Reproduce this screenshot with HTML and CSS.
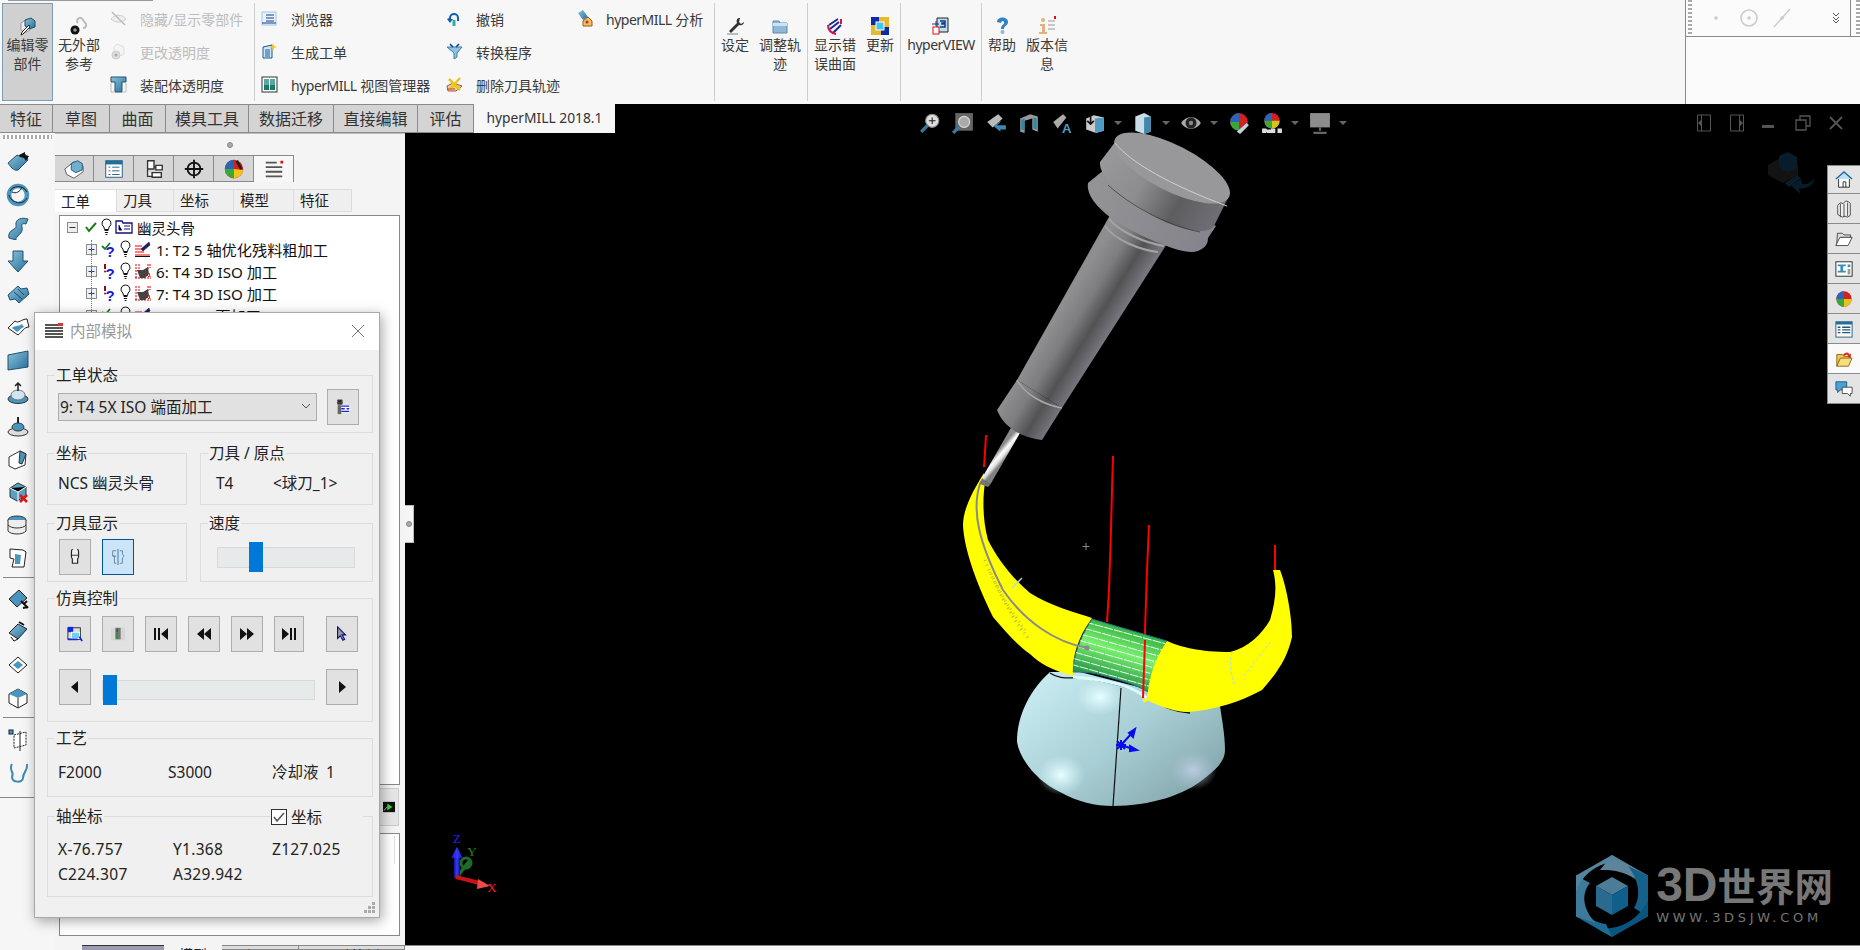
FILE: index.html
```html
<!DOCTYPE html>
<html lang="zh">
<head>
<meta charset="utf-8">
<title>hyperMILL 内部模拟</title>
<link rel="stylesheet" href="styles.css">
</head>
<body>
<svg class="defs" width="0" height="0">
  <defs>
    <symbol id="bulb" viewBox="0 0 11 18"><path d="M5.5 1a4.4 4.4 0 0 0-2.6 8l.6 2.5h4l.6-2.5a4.4 4.4 0 0 0-2.6-8z" fill="#fff" stroke="#111"/><path d="M3.6 12.5h3.8M3.9 14.5h3.2M4.6 16.500h1.800" stroke="#111" fill="none"/></symbol>
    <symbol id="plus" viewBox="0 0 11 11"><rect x=".5" y=".5" width="10" height="10" fill="#eef0f4" stroke="#8b8b8b"/><path d="M2.500 5.500h6M5.500 2.500v6" stroke="#1c3a7a"/></symbol>
    <symbol id="minus" viewBox="0 0 11 11"><rect x=".5" y=".5" width="10" height="10" fill="#eee" stroke="#8b8b8b"/><path d="M2.500 5.500h6" stroke="#333"/></symbol>
    <symbol id="opa" viewBox="0 0 18 16"><path d="M1 14h15M1 11h9M1 8h6M1 5h7" stroke="#e00" fill="none"/><path d="M1 15.500h15" stroke="#111"/><path d="M15 1 7 8l2 2 7-6z" fill="#223" stroke="#22c" stroke-width=".7"/></symbol>
    <symbol id="opb" viewBox="0 0 18 16"><path d="M2 1v14M5 1v5M14 1v5M16 1v4M1 15h16" stroke="#d00" fill="none" stroke-dasharray="2 1"/><path d="M3 7h6l5-3 1 7-4 4H6z" fill="#444"/><path d="M12 11l3 3M15 10l1 4" stroke="#e00"/></symbol>
    <symbol id="okst" viewBox="0 0 16 18"><path d="M1 6l3 3 5-6" fill="none" stroke="#1d7a1d" stroke-width="1.800"/><text x="9" y="17" class="qm">?</text></symbol>
    <symbol id="wnst" viewBox="0 0 16 18"><path d="M4 2v5" stroke="#8a0f0f" stroke-width="2"/><circle cx="4" cy="9.500" r="1" fill="#8a0f0f"/><text x="9" y="17" class="qm">?</text></symbol>
    <linearGradient id="tileblue" x1="0" y1="0" x2="1" y2="1"><stop offset="0" stop-color="#8cc3dc"/><stop offset="1" stop-color="#276f9a"/></linearGradient>
  </defs>
</svg>

<header class="ribbon">
  <div class="rb-big rb-pressed">
    <svg class="rb-ic" viewBox="0 0 20 20"><path d="M3 7l6-4 3 2v9l-5 3-4-3z" fill="#eee" stroke="#999"/><path d="M7 4l6-2 4 3v6l-6 2-4-3z" fill="url(#tileblue)" stroke="#1e4f6e"/><path d="M12 11l-7 7-2 1 1-3 7-7z" fill="#fff" stroke="#222"/></svg>
    <span>编辑零<br>部件</span>
  </div>
  <div class="rb-big rb-w52">
    <svg class="rb-ic" viewBox="0 0 20 20"><path d="M9 7a3 3 0 1 1 5-3l3 4a3 3 0 0 1-3 4" fill="none" stroke="#bbb" stroke-width="2"/><circle cx="6" cy="14" r="4.500" fill="#111"/><circle cx="6" cy="14" r="1.800" fill="#999"/></svg>
    <span>无外部<br>参考</span>
  </div>
  <div class="rb-col rb-c3">
    <div class="rb-row rb-off"><svg class="rb-sm" viewBox="0 0 17 17"><path d="M1 9c4-5 11-5 15 0-4 4-11 4-15 0z" fill="#eee" stroke="#ccc"/><path d="M2 2l13 13" stroke="#bbb" stroke-width="1.500"/></svg>隐藏/显示零部件</div>
    <div class="rb-row rb-off"><svg class="rb-sm" viewBox="0 0 17 17"><path d="M7 1l7 3v7l-4 2-6-3V4z" fill="#f4f4f4" stroke="#ddd"/><circle cx="6" cy="12" r="4" fill="#ddd" stroke="#ccc"/><circle cx="6" cy="12" r="1.500" fill="#aaa"/></svg>更改透明度</div>
    <div class="rb-row"><svg class="rb-sm" viewBox="0 0 17 17"><path d="M1 1h15v5h-4v10h-7V6H1z" fill="url(#tileblue)" stroke="#24526e"/><path d="M1 7v9h4M16 7v9h-4" fill="none" stroke="#bbb"/></svg>装配体透明度</div>
  </div>
  <i class="rb-sep"></i>
  <div class="rb-col rb-c4">
    <div class="rb-row"><svg class="rb-sm" viewBox="0 0 17 17"><rect x="1" y="2" width="14" height="13" fill="#e9f3fb" stroke="#9cc6e8"/><path d="M5 5h8M5 8h8M5 11h8M1 13h14" stroke="#123d8a"/></svg>浏览器</div>
    <div class="rb-row"><svg class="rb-sm" viewBox="0 0 17 17"><path d="M2 4l9-2v13H2z" fill="#cfe4f4" stroke="#1d5a94"/><path d="M4 7h5M4 9h5M4 11h5M4 13h5" stroke="#1d5a94"/><path d="M12 0l1 3 3 1-3 1-1 3-1-3-3-1 3-1z" fill="#f2c32c"/></svg>生成工单</div>
    <div class="rb-row"><svg class="rb-sm" viewBox="0 0 17 17"><rect x="1" y="1" width="15" height="15" fill="#fff" stroke="#333"/><path d="M3 3h5v11H3zM9 3h5v11H9z" fill="#1a7a6a"/><path d="M3 3h5v6H3zM9 3h5v6H9z" fill="#5aa7a0"/></svg><span><span class="lat">hyperMILL</span> 视图管理器</span></div>
  </div>
  <div class="rb-col rb-c5">
    <div class="rb-row"><svg class="rb-sm" viewBox="0 0 17 17"><path d="M3 8a5 5 0 1 1 10 0v3h-2V8a3 3 0 1 0-6 0v1h2l-3 4-3-4z" fill="#0e5fb0"/><path d="M8 10v6" stroke="#3aa" stroke-width="3"/></svg>撤销</div>
    <div class="rb-row"><svg class="rb-sm" viewBox="0 0 17 17"><path d="M1 4h15l-5 6v4l-3 2v-6z" fill="#8fc3e0" stroke="#3d7fa8"/><path d="M4 1l3 3M13 1l-3 3" stroke="#123d8a" stroke-width="1.500"/></svg>转换程序</div>
    <div class="rb-row"><svg class="rb-sm" viewBox="0 0 17 17"><path d="M1 10l6-3 9 3-6 5H2z" fill="#e7d38c" stroke="#a55"/><path d="M3 3l11 11M14 2 4 13" stroke="#e9c61c" stroke-width="2.500"/><path d="M1 13h8" stroke="#c33"/></svg>删除刀具轨迹</div>
  </div>
  <div class="rb-col rb-c6">
    <div class="rb-row"><svg class="rb-sm" viewBox="0 0 17 17"><path d="M2 3l5-3 5 7-5 3z" fill="url(#tileblue)"/><path d="M7 11l5-4 4 4v5H7z" fill="#f0c060" stroke="#a35a16"/><circle cx="11" cy="12" r="1.500" fill="#a33"/></svg><span><span class="lat">hyperMILL</span> 分析</span></div>
  </div>
  <i class="rb-sep"></i>
  <div class="rb-big rb-w40">
    <svg class="rb-ic" viewBox="0 0 20 20"><path d="M15 2c-3 0-4 2-3 5l-8 8 2 2 8-8c3 1 5-1 5-3l-3 2-2-2z" fill="#333"/><path d="M2 18h11" stroke="#bbb" stroke-width="2"/></svg>
    <span>设定</span>
  </div>
  <div class="rb-big rb-w50">
    <svg class="rb-ic" viewBox="0 0 20 20"><path d="M3 5h6l1 2h7v10H3z" fill="#8eb8d8" stroke="#5a8bb0"/><path d="M3 7h14v3H3z" fill="#cfe2f1"/></svg>
    <span>调整轨<br>迹</span>
  </div>
  <i class="rb-gap"></i>
  <i class="rb-sep"></i>
  <div class="rb-big rb-w54">
    <svg class="rb-ic" viewBox="0 0 20 20"><path d="M4 9l9-6M5 13l9-7M8 17l8-8" stroke="#1c2a8c" stroke-width="2" fill="none"/><path d="M3 9c0 5 3 8 8 9M16 3v5" stroke="#d3154f" stroke-width="2" fill="none"/></svg>
    <span>显示错<br>误曲面</span>
  </div>
  <div class="rb-big rb-w36">
    <svg class="rb-ic" viewBox="0 0 20 20"><rect x="1" y="1" width="18" height="18" fill="#e7b92c"/><rect x="1" y="1" width="8" height="8" fill="#0f2aa8"/><rect x="11" y="11" width="8" height="8" fill="#0f2aa8"/><rect x="6" y="6" width="8" height="8" fill="#41c8f2" stroke="#fff"/></svg>
    <span>更新</span>
  </div>
  <i class="rb-gap"></i>
  <i class="rb-sep"></i>
  <div class="rb-big rb-w80">
    <svg class="rb-ic" viewBox="0 0 20 20"><path d="M6 2h11v14H6z" fill="#bfe0e6" stroke="#222"/><path d="M9 5h5v2h-3v1h3v3H9" fill="none" stroke="#123a8a" stroke-width="1.500"/><rect x="2" y="11" width="6" height="7" fill="#fff" stroke="#d01414"/><path d="M1 8h7M5 5v5" stroke="#123a8a"/></svg>
    <span class="lat">hyperVIEW</span>
  </div>
  <i class="rb-sep"></i>
  <div class="rb-big rb-w40">
    <svg class="rb-ic" viewBox="0 0 20 20"><path d="M5 6c0-6 11-6 11 0 0 4-4 3-4 7H9c0-5 4-4 3-7-1-2-3-1-3 1z" fill="#2f83c5"/><circle cx="10.500" cy="16" r="2" fill="#8cb9d8"/></svg>
    <span>帮助</span>
  </div>
  <div class="rb-big rb-w50">
    <svg class="rb-ic" viewBox="0 0 20 20"><circle cx="6" cy="4" r="2" fill="#e3b27c"/><path d="M3 8h5v8h2v2H2v-2h3V10H3z" fill="#e3b27c"/><path d="M11 5h7M11 9h7M11 13h7" stroke="#999"/><rect x="17" y="0" width="2" height="3" fill="#d11"/></svg>
    <span>版本信<br>息</span>
  </div>
  <div class="rb-fill"></div>
  <aside class="snap">
    <div class="snap-top">
      <i class="grip-v"></i>
      <div class="snap-icons">
        <svg class="snap-ic" viewBox="0 0 20 20"><circle cx="10" cy="10" r="1.800" fill="#ccc"/></svg>
        <svg class="snap-ic" viewBox="0 0 20 20"><circle cx="10" cy="10" r="8" fill="none" stroke="#ccc" stroke-width="1.600"/><circle cx="10" cy="10" r="1.800" fill="#ccc"/></svg>
        <svg class="snap-ic" viewBox="0 0 20 20"><path d="M2 19 18 1" stroke="#ccc" stroke-width="1.400"/><circle cx="10" cy="10" r="1.800" fill="#ccc"/></svg>
      </div>
      <svg class="chev" viewBox="0 0 8 12"><path d="M1 1l3 3 3-3M1 5l3 3 3-3M1 8l3 3 3-3" fill="none" stroke="#555"/></svg>
      <i class="snap-line"></i>
      <i class="grip-v grip-r"></i>
    </div>
  </aside>
</header>

<main class="work">
  <nav class="cmd-tabs">
    <span class="cmd w53">特征</span><span class="cmd w57">草图</span><span class="cmd w56">曲面</span><span class="cmd w83">模具工具</span><span class="cmd w85">数据迁移</span><span class="cmd w84">直接编辑</span><span class="cmd w56">评估</span><span class="cmd cmd-on">hyperMILL 2018.1</span>
  </nav>

  <section class="left">
    <div class="lbar">
      <i class="grip-h"></i>
      <div class="lb"><svg viewBox="0 0 24 24"><path d="M2 13l9-8c3 2 6 1 8-1l3 6-10 10c-3 1-6-1-10-7z" fill="url(#tileblue)" stroke="#24526e"/><path d="M13 5l6-3v3l4 1-3 5-2-3-4-1z" fill="#111"/></svg></div>
      <div class="lb"><svg viewBox="0 0 24 24"><circle cx="12" cy="12" r="9" fill="none" stroke="#4a95bd" stroke-width="4.500"/><path d="M4 8c2-5 13-7 17 1M3 12c2 8 14 11 18 3" fill="none" stroke="#222"/><path d="M6 9c4 2 8 0 10-5" fill="none" stroke="#222"/></svg></div>
      <div class="lb"><svg viewBox="0 0 24 24"><path d="M3 22c-2-9 9-8 7-13-1-6 6-8 12-6l-2 5c-3-1-5 0-4 3 2 7-7 9-6 13z" fill="url(#tileblue)" stroke="#24526e"/></svg></div>
      <div class="lb"><svg viewBox="0 0 24 24"><path d="M7 2h10v10h5L12 23 2 12h5z" fill="url(#tileblue)" stroke="#24526e"/></svg></div>
      <div class="lb"><svg viewBox="0 0 24 24"><path d="M2 13l10-9 3 3 6-1 2 6-10 9-4-4-5 1z" fill="url(#tileblue)" stroke="#24526e"/><path d="M8 10l8 7M12 7l6 6" stroke="#1c4a66"/></svg></div>
      <div class="lb"><svg viewBox="0 0 24 24"><path d="M2 13l7-7c4 3 6-2 12-2l2 8c-5 0-7 5-11 8z" fill="#fff" stroke="#222"/><path d="M6 13c3-3 6-1 10-4l2 3c-3 1-5 4-7 5z" fill="#4a95bd"/></svg></div>
      <div class="lb"><svg viewBox="0 0 24 24"><path d="M2 7l20-4v16L2 22z" fill="url(#tileblue)" stroke="#24526e"/></svg></div>
      <div class="lb"><svg viewBox="0 0 24 24"><ellipse cx="12" cy="18" rx="10" ry="4.500" fill="#4a95bd" stroke="#333"/><ellipse cx="12" cy="14" rx="7" ry="5" fill="#cfe6f2" stroke="#777"/><path d="M12 2v8M9 5l3-3 3 3" stroke="#222" fill="none" stroke-width="1.500"/></svg></div>
      <div class="lb"><svg viewBox="0 0 24 24"><ellipse cx="12" cy="18" rx="10" ry="4" fill="#ddd" stroke="#333"/><ellipse cx="12" cy="13" rx="6" ry="4" fill="#4a95bd" stroke="#333"/><path d="M12 9V3" stroke="#222" stroke-width="2"/></svg></div>
      <div class="lb"><svg viewBox="0 0 24 24"><path d="M3 10l11-6 6 3-1 11-10 4-6-3z" fill="#fff" stroke="#333"/><path d="M14 4l6 3-4 10-3-1z" fill="#4a95bd" stroke="#333"/></svg></div>
      <div class="lb"><svg viewBox="0 0 24 24"><path d="M4 8l8-5 8 4v9l-9 5-7-4z" fill="#5aa0c5" stroke="#333"/><path d="M4 8l8 4 8-5M12 12v9" stroke="#fff"/><path d="M14 15l7 7M21 15l-7 7" stroke="#e01616" stroke-width="2.500"/></svg></div>
      <div class="lb"><svg viewBox="0 0 24 24"><ellipse cx="11" cy="7" rx="9" ry="4" fill="#4a95bd" stroke="#333"/><path d="M2 7v11c3 4 15 4 18 0V7" fill="#eee" stroke="#333"/><path d="M2 12c3 4 15 4 18 0" fill="none" stroke="#333"/></svg></div>
      <div class="lb"><svg viewBox="0 0 24 24"><path d="M4 3l13 1 3 2-2 15H6l2-8-4-1z" fill="#fff" stroke="#222"/><path d="M9 8l6 1-1 9H9z" fill="#4a95bd"/></svg></div>
      <i class="lb-sep"></i>
      <div class="lb"><svg viewBox="0 0 24 24"><path d="M3 12l10-9 8 8-10 9z" fill="#4a95bd" stroke="#222"/><path d="M15 14l7 7M21 14l-3 3M17 21l5-1" stroke="#111" stroke-width="2"/></svg></div>
      <div class="lb"><svg viewBox="0 0 24 24"><path d="M3 13l9-9 9 5-9 10z" fill="url(#tileblue)" stroke="#222"/><path d="M5 17l3 4 4-2" fill="none" stroke="#111"/><path d="M13 2l5 3" stroke="#111" stroke-width="2"/></svg></div>
      <div class="lb"><svg viewBox="0 0 24 24"><path d="M3 12l9-8 9 8-9 8z" fill="#fff" stroke="#222"/><path d="M12 8l5 4-5 4-5-4z" fill="#4a95bd"/></svg></div>
      <div class="lb"><svg viewBox="0 0 24 24"><path d="M3 8l9-5 9 5v9l-9 5-9-5z" fill="#fff" stroke="#222"/><path d="M3 8l9-5 9 5-9 4z" fill="#4a95bd"/><path d="M12 12v10" stroke="#222"/></svg></div>
      <i class="lb-sep lb-sep2"></i>
      <div class="lb"><svg viewBox="0 0 24 24"><path d="M8 7l12-3v13l-12 3z" fill="#fff" stroke="#222" stroke-dasharray="2 1"/><path d="M14 3v20" stroke="#222"/><rect x="3" y="2" width="4" height="4" fill="#4a95bd" stroke="#123"/></svg></div>
      <div class="lb"><svg viewBox="0 0 24 24"><path d="M6 3c-4 6 3 8 0 13 0 6 11 6 11 1 0-6 5-7 4-14" fill="none" stroke="#4189b0" stroke-width="2"/></svg></div>
      <i class="lb-sep lb-sep3"></i>
    </div>

    <div class="side">
      <div class="side-grip"><i class="dot"></i></div>
      <div class="mgr-tabs">
        <span class="mgr"><svg viewBox="0 0 24 24"><path d="M2 12l10-8 10 5v6l-10 7-8-4z" fill="#fff" stroke="#555"/><path d="M9 6l7-3 5 3v7l-7 3-5-3z" fill="#6fb0cf" stroke="#1f5775"/></svg></span>
        <span class="mgr"><svg viewBox="0 0 24 24"><rect x="3" y="3" width="18" height="18" fill="#fff" stroke="#1f5775"/><path d="M3 3h18v4H3z" fill="#1f6f9c"/><path d="M6 10h2M10 10h8M6 14h2M10 14h8M6 18h2M10 18h8" stroke="#1f5775"/></svg></span>
        <span class="mgr"><svg viewBox="0 0 24 24"><path d="M5 3h7v9H5zM5 12v8h5M10 16h10v5H10zM14 8h7v5h-7zM12 10h2" fill="#fff" stroke="#333" stroke-width="1.500"/></svg></span>
        <span class="mgr"><svg viewBox="0 0 24 24"><circle cx="12" cy="12" r="7" fill="none" stroke="#111" stroke-width="2"/><path d="M12 2v20M2 12h20" stroke="#111" stroke-width="2"/></svg></span>
        <span class="mgr"><svg viewBox="0 0 24 24"><circle cx="12" cy="12" r="10" fill="#d42020"/><path d="M12 12 2 12a10 10 0 0 1 9-10z" fill="#2b64b8"/><path d="M12 12 2 12a10 10 0 0 0 10 10z" fill="#38a838"/><path d="M12 12l10 1a10 10 0 0 1-10 9z" fill="#f0c418"/><path d="M15 3l5 9" stroke="#222" stroke-width="3"/></svg></span>
        <span class="mgr mgr-on"><svg viewBox="0 0 24 24"><path d="M3 5h12M3 10h18M3 15h18M3 20h18" stroke="#555" stroke-width="2"/><rect x="19" y="3" width="3" height="3" fill="#e01010"/></svg></span>
      </div>
      <div class="sub-tabs">
        <span class="sub sub-on">工单</span><span class="sub s57">刀具</span><span class="sub s60">坐标</span><span class="sub s60">模型</span><span class="sub s58">特征</span>
      </div>
      <div class="tree">
        <div class="tr tr-root">
          <svg class="t-ex"><use href="#minus"/></svg>
          <svg class="t-ok" viewBox="0 0 12 12"><path d="M1 6l3 4 7-8" fill="none" stroke="#1d7a1d" stroke-width="2"/></svg>
          <svg class="t-bulb"><use href="#bulb"/></svg>
          <svg class="t-op" viewBox="0 0 18 14"><path d="M1 1h6l1 2h9v10H1z" fill="#fff" stroke="#10107a" stroke-width="1.300"/><path d="M4 5v5h3M9 6h6M9 9h6" stroke="#10107a"/></svg>
          <span>幽灵头骨</span>
        </div>
        <div class="tr">
          <svg class="t-ex"><use href="#plus"/></svg><svg class="t-st"><use href="#okst"/></svg><svg class="t-bulb"><use href="#bulb"/></svg><svg class="t-op"><use href="#opa"/></svg><span>1: T2 5 轴优化残料粗加工</span>
        </div>
        <div class="tr">
          <svg class="t-ex"><use href="#plus"/></svg><svg class="t-st"><use href="#wnst"/></svg><svg class="t-bulb"><use href="#bulb"/></svg><svg class="t-op"><use href="#opb"/></svg><span>6: T4 3D ISO 加工</span>
        </div>
        <div class="tr">
          <svg class="t-ex"><use href="#plus"/></svg><svg class="t-st"><use href="#wnst"/></svg><svg class="t-bulb"><use href="#bulb"/></svg><svg class="t-op"><use href="#opb"/></svg><span>7: T4 3D ISO 加工</span>
        </div>
        <div class="tr">
          <svg class="t-ex"><use href="#plus"/></svg><svg class="t-st"><use href="#okst"/></svg><svg class="t-bulb"><use href="#bulb"/></svg><svg class="t-op"><use href="#opa"/></svg><span>9: T4 5X 面加工</span>
        </div>
      </div>
      <div class="side-btnrow">
        <span class="side-btn"><svg viewBox="0 0 14 12"><rect width="14" height="12" fill="#111"/><path d="M5 2l6 4-6 4z" fill="#2ee02e"/><path d="M1 10l4-4" stroke="#ccc"/></svg></span>
      </div>
      <div class="lower"><i class="lower-scroll"></i></div>
      <div class="btm-tabs">
        <span class="btm-strip"></span><span class="btm btm-on">模型</span><span class="btm btm-b">视图</span><span class="btm btm-c">运动算例</span>
      </div>
    </div>
  </section>

  <section class="view">
    <div class="canvas">
      <svg class="scene" viewBox="405 104 1455 841" preserveAspectRatio="none">
        <defs>
          <linearGradient id="shaft" gradientUnits="userSpaceOnUse" x1="1017" y1="380" x2="1062" y2="408"><stop offset="0" stop-color="#8e8e90"/><stop offset=".35" stop-color="#7d7d7f"/><stop offset=".68" stop-color="#525254"/><stop offset="1" stop-color="#77757d"/></linearGradient>
          <linearGradient id="capside" gradientUnits="userSpaceOnUse" x1="1101" y1="150" x2="1215" y2="215"><stop offset="0" stop-color="#9a9a9c"/><stop offset=".4" stop-color="#8d8d8f"/><stop offset=".72" stop-color="#5d5d60"/><stop offset="1" stop-color="#6f6d74"/></linearGradient>
          <linearGradient id="flange" gradientUnits="userSpaceOnUse" x1="1088" y1="183" x2="1208" y2="240"><stop offset="0" stop-color="#949496"/><stop offset="1" stop-color="#85838c"/></linearGradient>
          <linearGradient id="toolg" gradientUnits="userSpaceOnUse" x1="997" y1="452" x2="1005" y2="459"><stop offset="0" stop-color="#8a8a8a"/><stop offset=".4" stop-color="#fff"/><stop offset=".7" stop-color="#ddd"/><stop offset="1" stop-color="#808080"/></linearGradient>
          <linearGradient id="greeng" gradientUnits="userSpaceOnUse" x1="1115" y1="620" x2="1095" y2="680"><stop offset="0" stop-color="#2aa83c"/><stop offset=".45" stop-color="#7af06e"/><stop offset="1" stop-color="#208a44"/></linearGradient>
          <linearGradient id="domeg" x1="0" y1="0" x2="1" y2=".8"><stop offset="0" stop-color="#cdf0f5"/><stop offset=".55" stop-color="#a8cfd5"/><stop offset="1" stop-color="#83a5aa"/></linearGradient>
          <radialGradient id="hi1"><stop offset="0" stop-color="#e8ffff"/><stop offset="1" stop-color="#d5f5fa" stop-opacity="0"/></radialGradient>
          <radialGradient id="hi2"><stop offset="0" stop-color="#bccbe0"/><stop offset="1" stop-color="#a8c0d0" stop-opacity="0"/></radialGradient>
          <clipPath id="greenclip"><path d="M1092 619 1167 641C1158 655 1152 670 1148 692 1135 684 1120 680 1097 674 1088 672 1080 672 1073 672 1073 660 1078 640 1092 619z"/></clipPath>
          <linearGradient id="tz" x1="0" y1="0" x2="1" y2="0"><stop offset="0" stop-color="#1515a0"/><stop offset=".5" stop-color="#3a3aff"/><stop offset="1" stop-color="#1010a0"/></linearGradient>
        </defs>

        <path d="M986 435 985 452 984 467M1113 456 1112 490 1111 530 1109 590 1107 622M1149 525 1147 570 1145 630 1143 698M1275 545V570" fill="none" stroke="#f00" stroke-width="2"/>

        <path d="M1050 672C1030 690 1017 715 1017 742 1020 760 1038 782 1060 792 1078 802 1095 806 1113 806 1150 806 1185 795 1205 778 1218 768 1225 760 1225 750 1225 735 1222 720 1220 706L1150 690 1080 672z" fill="url(#domeg)"/>
        <ellipse cx="1100" cy="697" rx="24" ry="18" fill="url(#hi1)"/>
        <ellipse cx="1061" cy="775" rx="24" ry="20" fill="url(#hi1)"/>
        <ellipse cx="1193" cy="770" rx="24" ry="20" fill="url(#hi2)"/>
        <path d="M1121 688 1113 806" stroke="#111" stroke-width="1.200" fill="none"/>
        <path d="M1050 673C1060 680 1070 677 1085 678 1110 682 1135 688 1148 698 1165 708 1175 712 1190 713" fill="none" stroke="#111" stroke-width="1.300"/>
        <path d="M1073 677C1100 679 1130 684 1147 698" fill="none" stroke="#d8fbff" stroke-width="3"/>

        <path d="M1092 619 1167 641C1158 655 1152 670 1148 692 1135 684 1120 680 1097 674 1088 672 1080 672 1073 672 1073 660 1078 640 1092 619z" fill="url(#greeng)" stroke="#1b6f88" stroke-width="1"/>
        <g clip-path="url(#greenclip)" fill="none" stroke="#e8fff0" stroke-width="1" stroke-dasharray="9 1">
          <path d="M1085 622 1170 645M1083 628 1165 651M1080 634 1162 657M1078 640 1160 663M1076 646 1158 669M1074 652 1156 675M1072 658 1154 681M1070 664 1152 687"/>
        </g>

        <path d="M984 473C972 492 963 510 963 525 964 548 975 580 993 617 1006 632 1020 648 1030 654 1040 664 1052 670 1073 676 1072 660 1076 640 1092 618 1075 612 1050 606 1030 593 1012 578 997 558 988 540 982 518 983 495 985 483z" fill="#ff0"/>
        <path d="M1167 641C1180 647 1200 652 1230 652 1248 648 1262 634 1270 620 1276 600 1277 585 1273 570L1280 570C1286 585 1292 615 1292 637 1288 655 1280 670 1262 690 1240 702 1215 710 1187 712 1170 711 1157 705 1147 700 1148 690 1150 665 1167 641z" fill="#ff0"/>
        <path d="M1143 701 1147 700" stroke="#ff0" stroke-width="3"/>
        <path d="M985 560C995 585 1010 610 1025 630M990 572C1000 595 1012 615 1022 632M997 585C1005 605 1015 620 1028 638" fill="none" stroke="#8a8a66" stroke-width="3" stroke-dasharray="1 4" opacity=".55"/>
        <path d="M1012 588 1022 578" stroke="#b8d8e0" stroke-width="1.300"/>
        <path d="M1232 652C1228 665 1232 680 1236 686M1244 676 1272 640" fill="none" stroke="#b8d8e0" stroke-width="1" stroke-dasharray="3 2"/>
        <path d="M981 481C970 510 980 545 1003 590 1025 622 1055 642 1087 648" fill="none" stroke="#8a8a8a" stroke-width="2"/>
        <circle cx="1087" cy="648" r="2.500" fill="#8a8a8a"/>
        <path d="M1143 698 1145 640" stroke="#f00" stroke-width="2"/>

        <path d="M1012 426 1020 433 990 485 982 478z" fill="url(#toolg)"/>
        <path d="M982 478 980 484 988 487 990 485z" fill="#777"/>
        <path d="M1114 208 1172 236 1062 408 1017 380z" fill="url(#shaft)"/>
        <path d="M1017 380 1062 408 1042 440C1025 438 1005 430 997 410z" fill="url(#shaft)"/>
        <path d="M1017 380C1025 395 1045 405 1062 408" fill="none" stroke="#a9a9ad" stroke-width="1.500"/>
        <path d="M1105 226C1115 240 1140 250 1158 252M1109 219C1120 232 1145 243 1164 246" fill="none" stroke="#a3a3a7" stroke-width="2"/>
        <path d="M1088 183C1086 195 1098 208 1110 217 1125 228 1145 238 1160 243 1175 250 1190 254 1198 251 1205 248 1208 244 1208 238L1216 226 1110 165z" fill="url(#flange)"/>
        <path d="M1100 162C1098 178 1130 205 1165 222 1190 232 1208 234 1214 226L1228 198 1116 141z" fill="url(#capside)"/>
        <path d="M1108 185C1130 205 1165 225 1200 232" fill="none" stroke="#333" stroke-width=".7"/>
        <ellipse cx="1172" cy="168" rx="64" ry="23" transform="rotate(27 1172 168)" fill="#98989a"/>
        <path d="M1115 143C1130 162 1170 185 1227 206" fill="none" stroke="#cfcfd2" stroke-width="1"/>

        <path d="M1086 543v7M1082.500 546.500h7" stroke="#888"/>
        <g fill="none" stroke="#0a0af0" stroke-width="2"><path d="M1121 745 1133 732M1121 745 1133 749M1116 745h10M1121 740v10M1117 741l8 8M1125 741l-8 8"/></g>
        <path d="M1135 729 1129 733 1133 737zM1137 750 1130 746V751z" fill="#0a0af0" stroke="#0a0af0" stroke-width="2"/>

        <path d="M456 877 458 880C462 872 466 868 472 864L468 860C463 866 459 871 456 877z" fill="#1f6b2a"/>
        <circle cx="466" cy="863" r="5" fill="none" stroke="#1f6b2a" stroke-width="3"/>
        <path d="M454 858h6v18a3 3 0 0 1-6 0z" fill="url(#tz)"/>
        <path d="M451 858 457 847 463 858z" fill="url(#tz)"/>
        <path d="M456 875 480 881 479 885 456 879z" fill="#c81414"/>
        <path d="M478 879 490 886 477 889z" fill="#f04a4a"/>
        <text x="457" y="843" class="ax ax-z">Z</text>
        <text x="472" y="856" class="ax ax-y">Y</text>
        <text x="492" y="892" class="ax ax-x">X</text>

        <g opacity=".7"><path d="M1768 165l14-8 16 8v10l-15 8-15-8z" fill="#1c1c1c"/><path d="M1779 156l9-4 9 5v11l-9 4-9-5z" fill="#0c2a3f"/><path d="M1785 183l12-8 4 3-12 9z" fill="#0f2a3d"/><path d="M1815 178c-2 8-10 12-16 10l1 6-9-9 10-6 1 5c4 1 9-1 13-6z" fill="#0c2a3f"/></g>
      </svg>

      <div class="vtools">
        <svg viewBox="0 0 20 20"><circle cx="12" cy="8" r="6" fill="#ddd" stroke="#888"/><path d="M8 12l-6 6" stroke="#3a7a9c" stroke-width="3"/><path d="M12 5v6M9 8h6" stroke="#222"/></svg>
        <svg viewBox="0 0 20 20"><rect x="3" y="1" width="16" height="16" fill="#666"/><circle cx="11" cy="9" r="5" fill="#aaa" stroke="#ddd"/><path d="M7 13l-6 6" stroke="#3a7a9c" stroke-width="3"/></svg>
        <svg viewBox="0 0 20 20"><path d="M2 9l10-7 4 4-9 8z" fill="#bbb"/><path d="M19 12h-8l3-3v-1l-6 5 6 5v-2h5z" fill="#3f87ad"/></svg>
        <svg viewBox="0 0 20 20"><path d="M2 6l9-4 7 2v14l-5-2V6l-7 2v11l-4-1z" fill="#999"/><path d="M3 7l3-1v11l-3-1zM14 5l3 1v10l-3-1z" fill="#2a87a8"/></svg>
        <svg viewBox="0 0 20 20"><path d="M2 9l9-7 3 3-8 10z" fill="#aaa"/><text x="10" y="19" class="tb-a">A</text></svg>
        <svg viewBox="0 0 20 20"><path d="M2 6l7-3 9 2v12l-7 2-9-3z" fill="#ccc"/><path d="M10 6l8-1v12l-8 2z" fill="#4f9bc3"/><path d="M6 3v7M3 8l3 3 3-3" stroke="#111" fill="none" stroke-width="1.500"/></svg>
        <i class="caret"></i>
        <svg viewBox="0 0 20 20"><path d="M3 4l8-3 6 3v14l-6 2-8-3z" fill="#c9dde8"/><path d="M11 5l6-1v14l-6 2z" fill="#3f87ad"/></svg>
        <i class="caret"></i>
        <svg viewBox="0 0 20 20"><path d="M1 10c4-7 14-7 18 0-4 7-14 7-18 0z" fill="#aaa"/><circle cx="10" cy="10" r="5" fill="#222"/><circle cx="10" cy="10" r="2" fill="#888"/></svg>
        <i class="caret"></i>
        <svg viewBox="0 0 20 20"><circle cx="10" cy="9" r="8" fill="#d42020"/><path d="M10 9H2a8 8 0 0 1 8-8z" fill="#2b64b8"/><path d="M10 9H2a8 8 0 0 0 8 8z" fill="#38a838"/><path d="M8 18l9-8 2 2-8 8z" fill="#bcd6e6"/></svg>
        <svg class="vt-gap" viewBox="0 0 20 20"><circle cx="10" cy="8" r="7" fill="#d42020"/><path d="M10 8H3a7 7 0 0 1 7-7z" fill="#2b64b8"/><path d="M10 8H3a7 7 0 0 0 7 7z" fill="#38a838"/><path d="M10 8h7a7 7 0 0 1-7 7z" fill="#d6c21c"/><path d="M1 15h4v4H1zM9 15h4v4H9zM15 15h4v4h-4zM5 16h4v3H5z" fill="#ddd"/></svg>
        <i class="caret"></i>
        <svg viewBox="0 0 20 20"><rect x="1" y="1" width="18" height="13" fill="#8d8d8d"/><path d="M10 14v3M4 19h12" stroke="#666" stroke-width="2"/></svg>
        <i class="caret"></i>
      </div>

      <div class="wctl">
        <svg viewBox="0 0 16 18"><path d="M1.500 1h13v16h-13zM5.500 1v16" fill="none" stroke="#555"/><path d="M5 6 2 9l3 3z" fill="#555"/></svg>
        <svg viewBox="0 0 16 18"><path d="M1.500 1h13v16h-13zM10.500 1v16" fill="none" stroke="#555"/><path d="M11 6l3 3-3 3z" fill="#555"/></svg>
        <svg viewBox="0 0 16 18"><rect x="0" y="11" width="12" height="3" fill="#555"/></svg>
        <svg viewBox="0 0 16 18"><path d="M1 6h10v10H1zM5 6V2h10v10h-4" fill="none" stroke="#555" stroke-width="1.300"/></svg>
        <svg viewBox="0 0 16 18"><path d="M2 3l12 12M14 3 2 15" stroke="#555" stroke-width="1.800"/></svg>
      </div>

      <div class="vtabs">
        <span class="vt"><svg viewBox="0 0 20 20"><path d="M1 9l9-8 9 8" fill="#bfe0f2" stroke="#1f6f9c" stroke-width="1.500"/><path d="M4 9v9h12V9" fill="#fff" stroke="#222"/><path d="M9 18v-6h3v6" fill="none" stroke="#222"/></svg></span>
        <span class="vt"><svg viewBox="0 0 20 20"><path d="M3 6l3-3 3 1 3-3 3 1 2 2v13l-3 2-3-1-3 1-5-3z" fill="#eee" stroke="#444"/><path d="M6 4v15M10 4v15M14 3v15" stroke="#444"/></svg></span>
        <span class="vt"><svg viewBox="0 0 22 20"><path d="M3 3h6l2 2h8v3H7l-5 10z" fill="#ddd" stroke="#333"/><path d="M6 8h15l-5 10H1z" fill="#fff" stroke="#333"/></svg></span>
        <span class="vt"><svg viewBox="0 0 20 20"><rect x="1" y="2" width="18" height="16" fill="#fff" stroke="#222"/><path d="M3 5h9v2H9v5h3v2H3v-2h3V7H3z" fill="#3f8db5"/><path d="M14 5h3v3h-3z" fill="#3f8db5"/><path d="M14 10h3v6h-3z" fill="#999"/></svg></span>
        <span class="vt"><svg viewBox="0 0 20 20"><circle cx="10" cy="10" r="8.500" fill="#d42020"/><path d="M10 10H1.500a8.500 8.500 0 0 1 8.500-8.500z" fill="#2b64b8"/><path d="M10 10H1.500a8.500 8.500 0 0 0 8.500 8.500z" fill="#38a838"/><path d="M10 10h8.500a8.500 8.500 0 0 1-8.500 8.500z" fill="#e7c41c"/></svg></span>
        <span class="vt"><svg viewBox="0 0 20 20"><rect x="1" y="2" width="18" height="17" fill="#fff" stroke="#1f5775"/><path d="M1 2h18v3H1z" fill="#1f6f9c"/><path d="M3 8h3M3 11h3M3 14h3M8 8h9M8 11h9M8 14h9" stroke="#1f5775" stroke-width="1.500"/></svg></span>
        <span class="vt vt-on"><svg viewBox="0 0 20 20"><path d="M2 5h6l2 2h7v3H6l-4 8z" fill="#f2c94c" stroke="#8a6414"/><path d="M6 9h13l-4 9H2z" fill="#f8dd7e" stroke="#8a6414"/><path d="M9 5c3-3 6-3 7 0l2-1-1 5-4-2 2-1c-1-1-3-1-5 1z" fill="#d9251a"/></svg></span>
        <span class="vt"><svg viewBox="0 0 20 20"><path d="M1 2h12v9H6l-3 3v-3H1z" fill="#4aa3d6" stroke="#1f5775"/><path d="M8 8h11v7h-2v3l-3-3H8z" fill="#fff" stroke="#444"/></svg></span>
      </div>

      <div class="brand">
        <svg class="brand-hex" viewBox="0 0 72 82">
          <path d="M36 0 72 20.500V41C66 25 50 14 24 15z" fill="#5f8499"/>
          <path d="M52 11 72 20.500V61.500L58 53C66 40 62 24 52 11z" fill="#16618c"/>
          <path d="M72 45V61.500L36 82 20 73C42 76 62 66 72 45z" fill="#0a5580"/>
          <path d="M36 82 0 61.500V48C8 62 20 68 30 69z" fill="#1d6a92"/>
          <path d="M0 61.500V20.500L14 28C4 40 8 56 20 68z" fill="#3d7a9c"/>
          <path d="M0 20.500 36 0 46 6C26 6 8 16 0 36z" fill="#55859e"/>
          <path d="M36 16 57 28V54L36 66 15 54V28z" fill="#000"/>
          <path d="M36 22 52 31 36 40 20 31z" fill="#4d7c96"/>
          <path d="M20 31 36 40V60L20 51z" fill="#2a6a90"/>
          <path d="M52 31 36 40V60L52 51z" fill="#0f5f8c"/>
        </svg>
        <div class="brand-txt">
          <div class="brand-name"><span class="b3d">3D</span>世界网</div>
          <div class="brand-url">WWW.3DSJW.COM</div>
        </div>
      </div>
    </div>
    <div class="status"></div>
  </section>

  <div class="handle"><i class="dot"></i></div>

  <section class="dlg">
    <div class="dlg-title">
      <svg class="dlg-ic" viewBox="0 0 18 16"><path d="M0 2h18M0 5h18M0 8h18M0 11h18M0 14h18" stroke="#555" stroke-width="2"/><rect x="13" y="0" width="5" height="3" fill="#d33"/></svg>
      <span>内部模拟</span>
      <svg class="dlg-x" viewBox="0 0 12 12"><path d="M0 0l12 12M12 0 0 12" stroke="#777"/></svg>
    </div>
    <div class="dlg-body">
      <div class="grp g-job">
        <div class="lg">工单状态</div>
        <div class="job-row">
          <div class="sel"><span>9: T4 5X ISO 端面加工</span><svg viewBox="0 0 10 6"><path d="M1 1l4 4 4-4" fill="none" stroke="#555"/></svg></div>
          <span class="btn"><svg viewBox="0 0 18 18"><path d="M3 1h5v5H3zM2 4h7" fill="#222" stroke="#555"/><rect x="6" y="7" width="11" height="8" fill="#fff"/><path d="M7 8h9M7 11h4M13 11h3M7 14h9" stroke="#1428d8" stroke-width="1.500"/><path d="M3 7v10h4V7" fill="#666"/></svg></span>
        </div>
      </div>

      <div class="grp-row gr-a">
        <div class="grp g-a1"><div class="lg">坐标</div><div class="val-line">NCS 幽灵头骨</div></div>
        <div class="grp g-a2"><div class="lg">刀具 / 原点</div><div class="val-line vl-tool"><span class="vt4">T4</span><span>&lt;球刀_1&gt;</span></div></div>
      </div>

      <div class="grp-row gr-b">
        <div class="grp g-b1"><div class="lg">刀具显示</div>
          <div class="btns b-tool">
            <span class="btn"><svg viewBox="0 0 18 18"><path d="M5 3a4 4 0 0 1 8 0v6a4 4 0 0 1-1 2v5H6v-5a4 4 0 0 1-1-2z" fill="#eee" stroke="#222" stroke-width="1.300"/><path d="M5 7h8" stroke="#222"/></svg></span>
            <span class="btn btn-on"><svg viewBox="0 0 18 18"><path d="M9 0v18" stroke="#3a6a9a"/><path d="M7 2H3v6h2v8h2M11 2h3v4l2 2-2 2v6h-3M3 8h4" fill="none" stroke="#5c7f9f"/></svg></span>
          </div>
        </div>
        <div class="grp g-b2"><div class="lg">速度</div><div class="track t-speed"><i class="thumb th-speed"></i></div></div>
      </div>

      <div class="grp g-sim">
        <div class="lg">仿真控制</div>
        <div class="btns b-sim">
          <span class="btn"><svg viewBox="0 0 18 18"><rect x="1" y="2" width="14" height="13" fill="#ddd" stroke="#222"/><rect x="1" y="1" width="6" height="6" fill="#1428d8"/><rect x="5" y="7" width="9" height="7" fill="#6fd1ef" stroke="#fff"/><path d="M1 15h11M14 12l3 5" stroke="#1428d8" stroke-width="2"/></svg></span>
          <span class="btn"><svg viewBox="0 0 18 18"><rect x="1" y="2" width="16" height="14" fill="#d6d6d6"/><path d="M6 2h6v13H6z" fill="#777"/><path d="M8 8v6" stroke="#18a018" stroke-width="2"/><path d="M8 3v4" stroke="#333"/></svg></span>
          <span class="btn"><svg viewBox="0 0 16 12"><path d="M1 0h2v12H1zM5 0h2v12H5zM15 0v12L8 6z" fill="#111"/></svg></span>
          <span class="btn"><svg viewBox="0 0 16 12"><path d="M8 0v12L1 6zM15 0v12L8 6z" fill="#111"/></svg></span>
          <span class="btn"><svg viewBox="0 0 16 12"><path d="M1 0v12l7-6zM8 0v12l7-6z" fill="#111"/></svg></span>
          <span class="btn btn-n"><svg viewBox="0 0 16 12"><path d="M1 0v12l7-6zM9 0h2v12H9zM13 0h2v12h-2z" fill="#111"/></svg></span>
          <span class="btn btn-end"><svg viewBox="0 0 18 18"><path d="M4 1v13l3-3 3 5 2-1-3-5h4z" fill="#999" stroke="#0a0a80" stroke-width="1.200"/></svg></span>
        </div>
        <div class="pos-row">
          <span class="btn btn-s"><svg viewBox="0 0 8 12"><path d="M7 0v12L0 6z" fill="#111"/></svg></span>
          <div class="track t-pos"><i class="thumb th-pos"></i></div>
          <span class="btn btn-s"><svg viewBox="0 0 8 12"><path d="M1 0v12l7-6z" fill="#111"/></svg></span>
        </div>
      </div>

      <div class="grp g-tech">
        <div class="lg">工艺</div>
        <div class="val-line vl-tech"><span class="c-f">F2000</span><span class="c-s">S3000</span><span class="c-c">冷却液</span><span>1</span></div>
      </div>

      <div class="grp g-axis">
        <div class="lg-row">
          <div class="lg lg-flat">轴坐标</div>
          <label class="chk"><svg viewBox="0 0 16 16"><rect x=".5" y=".5" width="15" height="15" fill="#fff" stroke="#333"/><path d="M3 8l3 4 7-8" fill="none" stroke="#555" stroke-width="1.500"/></svg>坐标</label>
        </div>
        <div class="axis-grid">
          <span>X-76.757</span><span>Y1.368</span><span>Z127.025</span>
          <span>C224.307</span><span>A329.942</span>
        </div>
      </div>
    </div>
    <svg class="dlg-grip" viewBox="0 0 12 12"><path d="M8 0h3v3H8zM4 4h3v3H4zM8 4h3v3H8zM0 8h3v3H0zM4 8h3v3H4zM8 8h3v3H8z" fill="#aaa"/></svg>
  </section>
</main>
</body>
</html>
```

FILE: styles.css
```css
* { box-sizing: border-box; }
html, body { margin: 0; height: 100%; overflow: hidden; }
body {
  width: 1860px; height: 950px;
  display: flex; flex-direction: column;
  font-family: "Noto Sans", "Noto Sans CJK SC", sans-serif;
  font-size: 14px; color: #3a3a3a;
  background: #000;
}
i { display: block; font-style: normal; }
.defs { position: absolute; }
.qm { font: bold 15px "Liberation Sans", sans-serif; fill: #1414e0; text-anchor: middle; }
.lat { letter-spacing: -.5px; }

/* ribbon */
.ribbon { position: relative; height: 104px; flex: none; display: flex; background: #f7f7f7; padding-left: 2px; }
.ribbon::before { content: ""; position: absolute; left: 8px; top: 0; width: 145px; height: 1px; background: #999; }
.rb-big { width: 51px; height: 98px; margin-top: 3px; display: flex; flex-direction: column; align-items: center; padding-top: 13px; text-align: center; line-height: 19px; white-space: nowrap; flex: none; }
.rb-big span { margin-top: -1px; }
.rb-pressed { background: #d0d0d0; border: 1px solid #7d9db8; padding-top: 12px; }
.rb-ic { width: 20px; height: 20px; flex: none; }
.rb-w52 { width: 52px; }
.rb-w40 { width: 40px; }
.rb-w50 { width: 50px; }
.rb-w54 { width: 54px; }
.rb-w36 { width: 36px; }
.rb-w80 { width: 80px; }
.rb-gap { width: 2px; flex: none; }
.rb-sep { width: 1px; height: 98px; margin-top: 3px; background: #cdcdcd; flex: none; }
.rb-col { display: flex; flex-direction: column; padding-top: 2px; flex: none; }
.rb-c3 { width: 149px; padding-left: 5px; }
.rb-c4 { width: 185px; padding-left: 6px; }
.rb-c5 { width: 130px; padding-left: 6px; }
.rb-c6 { width: 144px; padding-left: 6px; }
.rb-row { height: 33px; display: flex; align-items: center; gap: 13px; white-space: nowrap; }
.rb-off { color: #bdbdbd; }
.rb-sm { width: 17px; height: 17px; flex: none; }
.rb-fill { flex: 1; }

.snap { width: 175px; flex: none; background: #fbfbfb; border-left: 1px solid #8a8a8a; }
.snap-top { height: 37px; display: flex; align-items: center; border-bottom: 1px solid #8a8a8a; }
.grip-v { width: 4px; height: 36px; margin-left: 2px; flex: none; background: repeating-linear-gradient(to bottom, #aaa 0 2px, #fff 2px 4px); }
.grip-r { margin-left: 5px; }
.snap-icons { display: flex; align-items: center; gap: 13px; margin-left: 14px; }
.snap-ic { width: 20px; height: 20px; }
.chev { width: 8px; height: 12px; margin-left: 40px; flex: none; }
.snap-line { width: 1px; height: 36px; margin-left: 10px; background: #8a8a8a; flex: none; }

/* work area */
.work { position: relative; flex: 1; display: flex; min-height: 0; }
.cmd-tabs { position: absolute; left: 0; top: 0; height: 29px; display: flex; z-index: 3; }
.cmd { display: flex; align-items: center; justify-content: center; padding-bottom: 2px; background: #d4d4d4; border: 1px solid #8a8a8a; border-left: 0; font-size: 16px; color: #333; }
.w53 { width: 53px; } .w57 { width: 57px; } .w56 { width: 56px; } .w83 { width: 83px; } .w85 { width: 85px; } .w84 { width: 84px; }
.cmd-on { width: 141px; background: #f7f7f7; border: 0; font-size: 13.800px; }

.left { width: 405px; flex: none; display: flex; background: #f6f6f6; padding-top: 29px; }
.lbar { width: 55px; flex: none; display: flex; flex-direction: column; align-items: stretch; }
.grip-h { height: 4px; margin: 2px 3px 6px; background: repeating-linear-gradient(to right, #aaa 0 2px, #fff 2px 4px); }
.lb { height: 33px; display: flex; align-items: center; justify-content: center; flex: none; }
.lb svg { width: 24px; height: 24px; margin-right: 20px; }
.lb-sep { height: 1px; background: #888; margin: 3px 0 4px 3px; }
.lb-sep2 { margin: 3px 0 5px 3px; }
.lb-sep3 { margin: 8px 0 0; }

.side { width: 350px; flex: none; display: flex; flex-direction: column; position: relative; background: #f4f4f4; }
.side-grip { height: 22px; display: flex; justify-content: center; align-items: center; border-top: 1px solid #bdbdbd; }
.dot { width: 6px; height: 6px; border-radius: 50%; background: #aaa; border: 1px solid #888; }
.mgr-tabs { height: 27px; display: flex; flex: none; }
.mgr { width: 40px; display: flex; align-items: center; justify-content: center; background: #d6d6d6; border: 1px solid #8a8a8a; border-left-width: 0; }
.mgr:first-child { width: 39px; border-left: 0; }
.mgr svg { width: 22px; height: 22px; }
.mgr-on { background: #f7f7f7; border-bottom: 0; }
.sub-tabs { height: 23px; margin-top: 7px; display: flex; flex: none; }
.sub { width: 58px; display: flex; align-items: center; padding: 0 0 2px 6px; background: #efefef; border: 1px solid #dcdcdc; border-left: 0; font-size: 14.500px; color: #222; }
.sub-on { width: 62px; background: #fff; border-bottom: 0; }
.s57 { width: 57px; } .s60 { width: 60px; } .s58 { width: 58px; }
.tree { position: relative; width: 341px; height: 570px; margin: 3px 0 0 4px; flex: none; background: #fff; border: 1px solid #888; font-size: 15.200px; color: #111; }
.tree::before { content: ""; position: absolute; left: 31px; top: 24px; height: 90px; border-left: 1px dotted #777; }
.tr { height: 22px; display: flex; align-items: center; padding-left: 26px; white-space: nowrap; }
.tr svg { flex: none; }
.tr-root { padding-left: 7px; }
.tr-root span { font-size: 14.500px; }
.t-ex { width: 11px; height: 11px; margin-right: 4px; }
.tr-root .t-ex { margin-right: 7px; }
.t-ok { width: 12px; height: 12px; margin-right: 4px; }
.t-st { width: 16px; height: 18px; margin-right: 3px; }
.t-bulb { width: 11px; height: 18px; margin-right: 3px; }
.t-op { width: 18px; height: 16px; margin-right: 4px; }
.side-btnrow { height: 38px; margin-top: 3px; display: flex; justify-content: flex-end; padding-right: 6px; flex: none; }
.side-btn { width: 20px; background: #e6e6e6; border: 1px solid #ccc; display: flex; align-items: center; justify-content: center; }
.side-btn svg { width: 12px; height: 12px; }
.lower { position: relative; width: 341px; height: 103px; margin: 7px 0 0 4px; flex: none; background: #fff; border: 1px solid #888; }
.lower-scroll { position: absolute; right: 4px; top: 2px; height: 28px; width: 1px; background: #ddd; }
.btm-tabs { height: 5px; margin-top: 9px; display: flex; flex: none; overflow: hidden; font-size: 14px; line-height: 20px; color: #222; }
.btm { display: block; text-align: center; border: 1px solid #888; border-left: 0; background: #dcdcdc; }
.btm-strip { width: 82px; margin-left: 27px; background: #9a9ab0; border-top: 1px solid #333; }
.btm-on { width: 58px; background: #f4f4f4; border: 0; }
.btm-b { width: 77px; }
.btm-c { width: 106px; }

/* viewport */
.view { flex: 1; display: flex; flex-direction: column; min-width: 0; }
.canvas { position: relative; flex: 1; background: #000; overflow: hidden; }
.status { height: 5px; flex: none; background: #f5f5f5; border-top: 1px solid #888; }
.scene { position: absolute; left: 0; top: 0; width: 100%; height: 100%; }
.ax { font: 13px "Liberation Serif", serif; text-anchor: middle; }
.ax-z { fill: #2222ff; } .ax-y { fill: #1f8a1f; } .ax-x { fill: #ff2020; }
.tb-a { font: bold 12px "Liberation Sans", sans-serif; fill: #4f9bc3; }

.vtools { position: absolute; left: 514px; top: 8px; display: flex; align-items: center; gap: 11px; }
.vtools svg { width: 22px; height: 22px; flex: none; }
.caret { width: 0; height: 0; margin: 0 -1px 0 -3px; border: 4px solid transparent; border-top: 4px solid #666; border-bottom: 0; }
.wctl { position: absolute; right: 16px; top: 10px; display: flex; gap: 17px; }
.wctl svg { width: 16px; height: 18px; }
.vtabs { position: absolute; right: 0; top: 61px; width: 33px; display: flex; flex-direction: column; }
.vt { height: 30px; display: flex; align-items: center; justify-content: center; background: #e4e4e4; border: 1px solid #8a8a8a; border-right: 0; border-top: 0; }
.vt:first-child { height: 29px; border-top: 1px solid #8a8a8a; }
.vt svg { width: 18px; height: 18px; }
.vt-on { background: #fafafa; }
.brand { position: absolute; right: 27px; bottom: 8px; display: flex; align-items: center; gap: 8px; color: #777; }
.brand-hex { width: 72px; height: 82px; flex: none; }
.brand-txt { display: flex; flex-direction: column; gap: 3px; margin-top: -2px; }
.brand-name { font: bold 38.500px/40px "Liberation Sans", "Noto Sans CJK SC", sans-serif; white-space: nowrap; }
.b3d { font-size: 48px; }
.brand-url { font: 13px/14px "DejaVu Sans", sans-serif; letter-spacing: 3.700px; white-space: nowrap; }

.handle { position: absolute; left: 405px; top: 401px; width: 9px; height: 38px; display: flex; align-items: center; justify-content: center; background: #f5f5f5; border: 1px solid #bbb; border-left: 0; z-index: 2; }

/* dialog */
.dlg { position: absolute; left: 34px; top: 208px; width: 346px; height: 606px; z-index: 5; background: #f0f0f0; border: 1px solid #a8a8a8; box-shadow: 2px 3px 12px rgba(0,0,0,.35); color: #222; font-size: 15.500px; }
.dlg-title { height: 37px; background: #fff; display: flex; align-items: center; padding: 0 15px 2px 10px; color: #999; }
.dlg-ic { width: 18px; height: 16px; margin-right: 7px; }
.dlg-x { width: 12px; height: 12px; margin-left: auto; }
.dlg-body { padding: 25px 6px 0 12px; }
.grp { border: 1px solid #dcdcdc; }
.lg { width: fit-content; height: 20px; margin: -10px 0 0 7px; padding: 0 1px; background: #f0f0f0; line-height: 18px; white-space: nowrap; }
.g-job { height: 58px; }
.job-row { display: flex; align-items: center; gap: 10px; margin: 3px 0 0 10px; }
.sel { width: 259px; height: 28px; display: flex; align-items: center; justify-content: space-between; padding: 0 5px 2px 1px; background: #e1e1e1; border: 1px solid #adadad; }
.sel svg { width: 10px; height: 6px; }
.btn { width: 32px; height: 36px; flex: none; display: flex; align-items: center; justify-content: center; background: #e1e1e1; border: 1px solid #adadad; }
.btn svg { width: 16px; height: 16px; }
.btn-s svg { width: 8px; height: 12px; }
.btn-on { background: #cce4f7; border-color: #005499; }
.btn-n { width: 30px; }
.btn-end { margin-left: auto; }
.grp-row { display: flex; gap: 13px; }
.gr-a { margin-top: 20px; }
.gr-b { margin-top: 18px; }
.g-a1, .g-b1 { width: 140px; }
.g-a2, .g-b2 { width: 173px; }
.g-a1, .g-a2 { height: 52px; }
.g-b1, .g-b2 { height: 59px; }
.val-line { height: 20px; margin: 10px 0 0 10px; line-height: 18px; white-space: nowrap; display: flex; }
.vl-tool { margin-left: 15px; }
.vt4 { width: 57px; }
.btns { display: flex; gap: 11px; margin-left: 11px; }
.b-tool { margin-top: 5px; }
.b-sim { margin: 7px 14px 0 11px; }
.track { position: relative; background: #e7eaea; border: 1px solid #d9d9d9; }
.thumb { position: absolute; width: 14px; height: 30px; background: #0078d7; }
.t-speed { width: 138px; height: 21px; margin: 13px 0 0 16px; }
.th-speed { left: 31px; top: -6px; }
.g-sim { height: 124px; margin-top: 16px; }
.pos-row { display: flex; gap: 11px; margin: 17px 14px 0 11px; align-items: flex-start; }
.t-pos { flex: 1; height: 20px; margin-top: 11px; }
.th-pos { left: 0; top: -6px; }
.g-tech { height: 59px; margin-top: 16px; }
.vl-tech { margin-top: 14px; }
.c-f { width: 110px; } .c-s { width: 104px; } .c-c { width: 54px; }
.g-axis { height: 81px; margin-top: 19px; }
.lg-row { display: flex; justify-content: space-between; height: 20px; margin-top: -10px; padding: 0 9px 0 7px; }
.lg-flat { margin: 0; }
.chk { display: flex; align-items: center; gap: 4px; width: 92px; background: #f0f0f0; line-height: 18px; }
.chk svg { width: 16px; height: 16px; flex: none; }
.axis-grid { display: grid; grid-template-columns: 115px 99px 100px; grid-auto-rows: 25px; margin: 11px 0 0 10px; line-height: 23px; letter-spacing: .3px; }
.dlg-grip { position: absolute; right: 3px; bottom: 3px; width: 12px; height: 12px; }
```
